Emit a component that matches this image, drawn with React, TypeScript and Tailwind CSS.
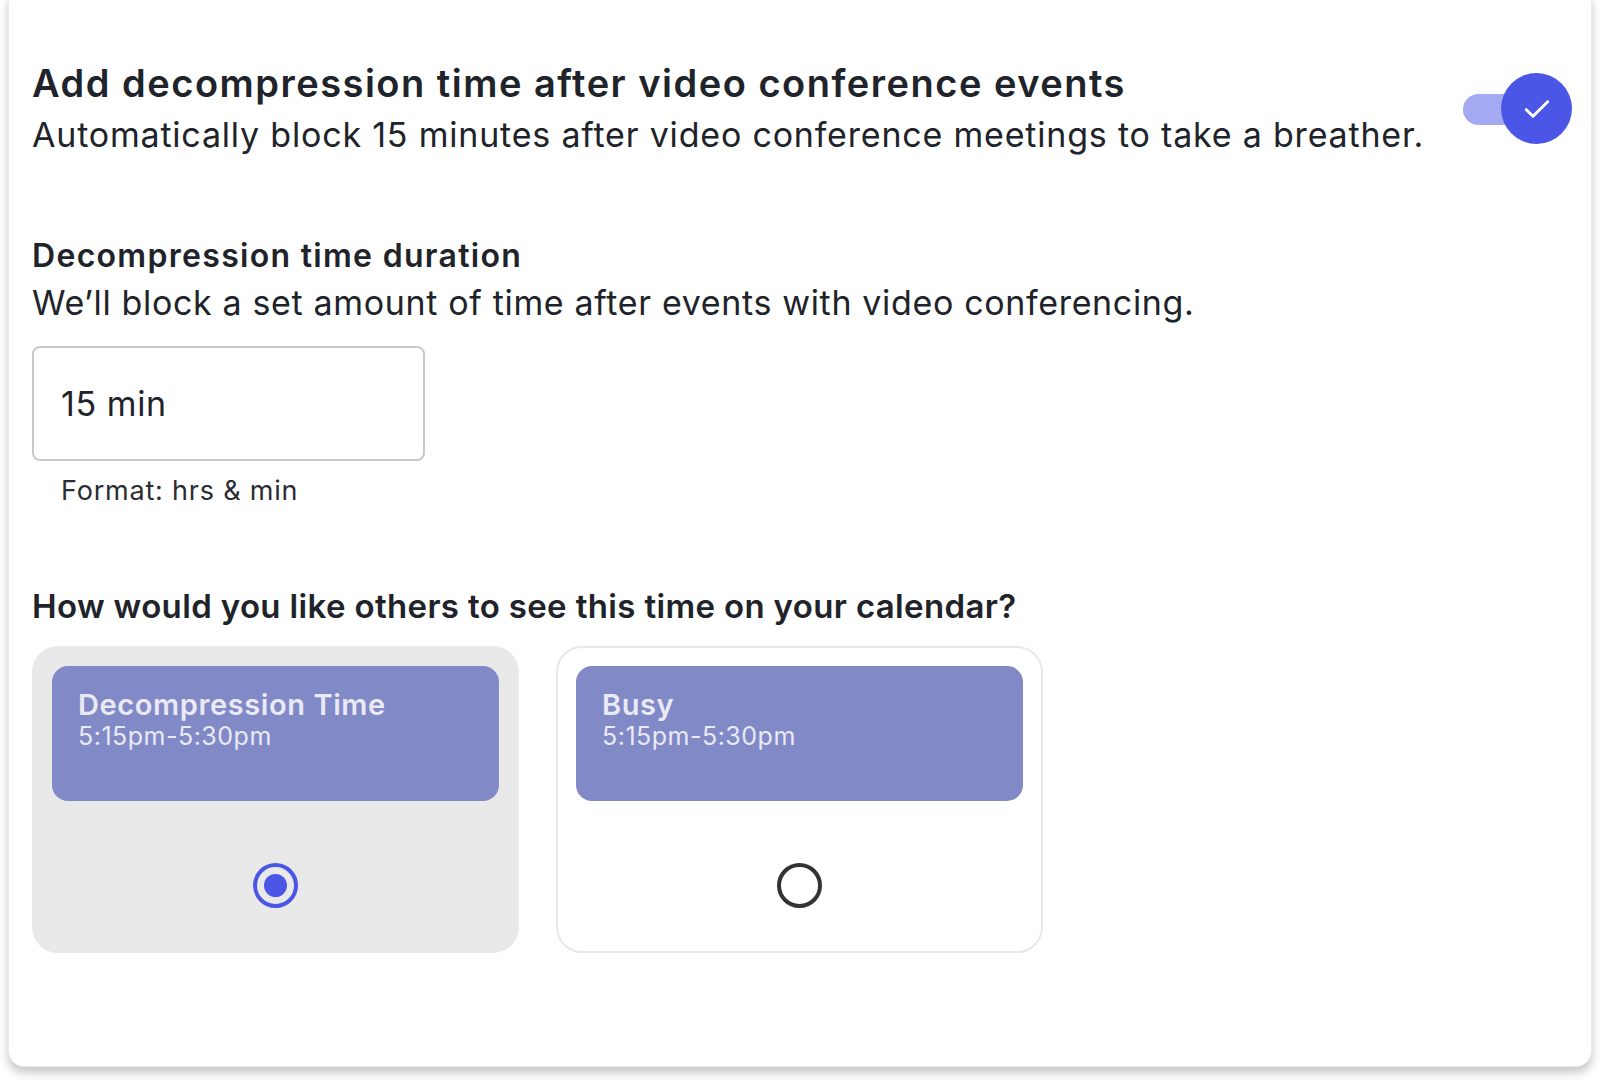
import React from "react";

export default function App() {
  return (
    <div className="w-[1600px] h-[1085px] bg-white overflow-hidden" style={{ fontFamily: "Inter, 'Noto Sans', sans-serif" }}>
      <div className="mx-[8px] mt-[-12px] h-[1079px] rounded-[16px] bg-white border border-[#ececec] shadow-[0_6px_10px_rgba(0,0,0,0.22)] pl-[23px] pr-[50px] text-[#202329]">
        <div className="flex items-start justify-between pt-[71px]">
          <div className="flex flex-col">
            <div className="text-[38px] leading-[46px] font-semibold tracking-[1.5px]">Add decompression time after video conference events</div>
            <div className="text-[34px] leading-[46px] mt-[6px] tracking-[0.8px]">Automatically block 15 minutes after video conference meetings to take a breather.</div>
          </div>
          <div className="relative w-[128px] h-[72px] mt-[13px] mr-[-50px] flex items-center">
            <div className="w-[90px] h-[31px] rounded-full bg-[#a4aaf2]" />
            <div className="absolute right-[19px] top-0 w-[71px] h-[71px] rounded-full bg-[#4b56e6] flex items-center justify-center">
              <svg width="32" height="32" viewBox="0 0 24 24" fill="none" stroke="white" strokeWidth="2.2" strokeLinecap="round" strokeLinejoin="round">
                <path d="M4 12.5l5 5L20 6.5" />
              </svg>
            </div>
          </div>
        </div>

        <div className="mt-[78px] text-[32px] leading-[40px] font-semibold tracking-[1.3px]">Decompression time duration</div>
        <div className="text-[34px] leading-[46px] mt-[4px] tracking-[0.65px]">We’ll block a set amount of time after events with video conferencing.</div>

        <div className="mt-[20px] w-[393px] h-[115px] rounded-[8px] border-2 border-[#c9c9c9] flex items-center pl-[27px] text-[34px] tracking-[0.6px]">15 min</div>
        <div className="mt-[13px] pl-[29px] text-[27px] leading-[34px] tracking-[0.8px] text-[#2a2d33]">Format: hrs &amp; min</div>

        <div className="mt-[76px] text-[33px] leading-[44px] font-semibold tracking-[0.35px]">How would you like others to see this time on your calendar?</div>

        <div className="mt-[18px] flex gap-[37px]">
          <div className="w-[487px] h-[307px] rounded-[26px] bg-[#e9e9e9] p-[20px] flex flex-col">
            <div className="h-[135px] rounded-[16px] bg-[#8189c6] pl-[26px] pt-[22px] text-[#e9eaf6]">
              <div className="text-[29px] leading-[34px] font-semibold tracking-[0.6px]">Decompression Time</div>
              <div className="text-[25px] leading-[28px] tracking-[0.5px]">5:15pm-5:30pm</div>
            </div>
            <div className="flex-1 flex items-center justify-center">
              <div className="w-[45px] h-[45px] rounded-full border-[4px] border-[#4b56e6] flex items-center justify-center mt-[36px]">
                <div className="w-[23px] h-[23px] rounded-full bg-[#4b56e6]" />
              </div>
            </div>
          </div>
          <div className="w-[487px] h-[307px] rounded-[26px] bg-white border-2 border-[#e8e8e8] p-[18px] flex flex-col">
            <div className="h-[135px] rounded-[16px] bg-[#8189c6] pl-[26px] pt-[22px] text-[#e9eaf6]">
              <div className="text-[29px] leading-[34px] font-semibold tracking-[0.6px]">Busy</div>
              <div className="text-[25px] leading-[28px] tracking-[0.5px]">5:15pm-5:30pm</div>
            </div>
            <div className="flex-1 flex items-center justify-center">
              <div className="w-[45px] h-[45px] rounded-full border-[4px] border-[#333333] mt-[36px]" />
            </div>
          </div>
        </div>
      </div>
    </div>
  );
}
